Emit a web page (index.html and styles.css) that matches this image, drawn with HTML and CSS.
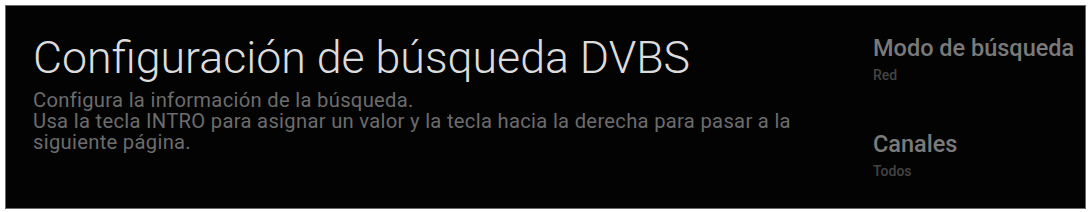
FILE: index.html
```html
<!DOCTYPE html>
<html lang="es">
<head>
    <meta charset="UTF-8">
    <title>Configuración de búsqueda DVBS</title>
    <link rel="stylesheet" href="styles.css">
</head>
<body>
    <div class="panel">
        <div class="info">
            <h1>Configuración de búsqueda DVBS</h1>
            <p>Configura la información de la búsqueda.</p>
            <p>Usa la tecla INTRO para asignar un valor y la tecla hacia la derecha para pasar a la siguiente página.</p>
        </div>
        <div class="options">
            <div class="option">
                <div class="name">Modo de búsqueda</div>
                <div class="value">Red</div>
            </div>
            <div class="option">
                <div class="name">Canales</div>
                <div class="value">Todos</div>
            </div>
        </div>
    </div>
</body>
</html>
```

FILE: styles.css
```css
body {
    margin: 0;
    padding: 5px 4px 3px 5px;
    background: #fff;
    font-family: Roboto, "Liberation Sans", sans-serif;
}
.panel {
    display: flex;
    height: 204px;
    box-sizing: border-box;
    background: #030303;
    border: 1px solid #6a6a6a;
    padding: 0 0 0 27px;
}
.info {
    width: 790px;
    padding-top: 27px;
}
h1 {
    margin: 0 0 7px;
    font-size: 44.7px;
    font-weight: 300;
    line-height: 50px;
    color: #dcdcdc;
}
p {
    margin: 0;
    font-size: 20.2px;
    letter-spacing: 0.3px;
    line-height: 21px;
    color: #6c6c6c;
}
.options {
    margin-left: 50px;
    padding-top: 28px;
}
.option {
    margin-bottom: 46px;
}
.name {
    font-size: 23.5px;
    font-weight: 500;
    line-height: 28px;
    color: #7a7a7a;
}
.value {
    margin-top: 4px;
    font-size: 14px;
    font-weight: 500;
    line-height: 18px;
    color: #444;
}
```
